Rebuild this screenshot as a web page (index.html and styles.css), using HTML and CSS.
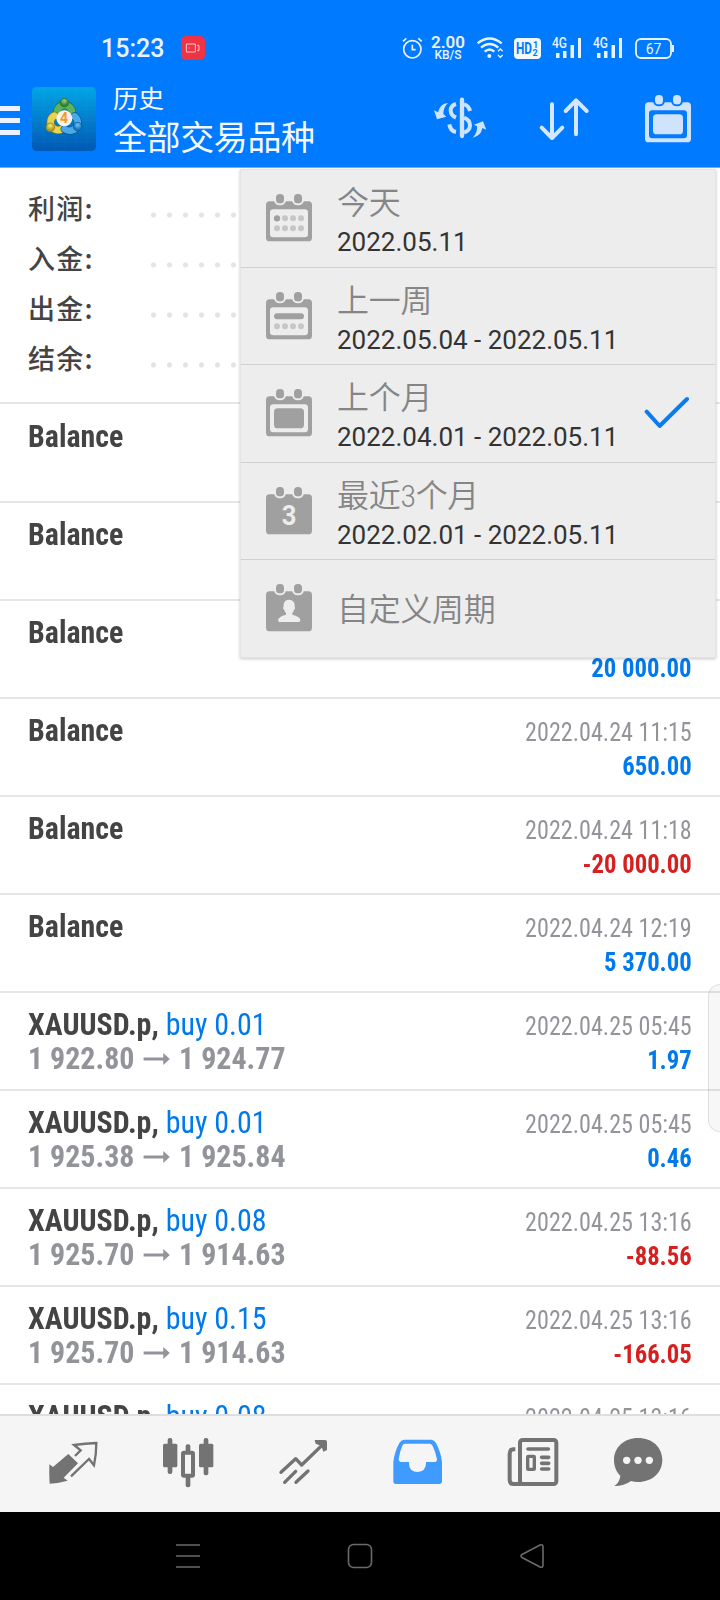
FILE: index.html
```html
<!DOCTYPE html>
<html lang="zh-CN">
<head>
    <meta charset="UTF-8">
    <meta name="viewport" content="width=device-width, initial-scale=1.0">
    <title>历史</title>
    <link rel="stylesheet" href="styles.css">
</head>
<body>
    <!-- shared calendar shapes -->
    <svg class="defs" width="0" height="0">
        <defs>
            <mask id="cal-body">
                <rect width="138" height="144" fill="#fff"/>
                <rect x="24" y="-8" width="36" height="42" rx="17" fill="#000"/>
                <rect x="78" y="-8" width="36" height="42" rx="17" fill="#000"/>
            </mask>
            <g id="cal-rings">
                <rect x="30" y="0" width="24" height="28" rx="11"/>
                <rect x="84" y="0" width="24" height="28" rx="11"/>
            </g>
            <g id="cal-solid">
                <use href="#cal-rings"/>
                <rect y="22" width="138" height="120" rx="11" mask="url(#cal-body)"/>
            </g>
            <g id="cal-frame">
                <use href="#cal-rings"/>
                <path fill-rule="evenodd" mask="url(#cal-body)" d="M11 22H127Q138 22 138 33V131Q138 142 127 142H11Q0 142 0 131V33Q0 22 11 22ZM22 46Q12 46 12 56V120Q12 130 22 130H116Q126 130 126 120V56Q126 46 116 46Z"/>
            </g>
        </defs>
    </svg>

    <div class="phone">
        <header class="header">
            <div class="status-bar">
                <span class="clock">15:23</span>
                <svg class="rec" width="24" height="24" viewBox="0 0 72 72">
                    <rect width="72" height="72" rx="15" fill="#ee3344"/>
                    <path d="M16 24H43V48H16ZM48 30Q54 24 54 30V42Q54 48 48 42M23 36H26" fill="none" stroke="#ffc9ce" stroke-width="3"/>
                </svg>
                <svg class="alarm" width="22" height="24" viewBox="125 108 66 72" fill="none" stroke="#e9f3ff" stroke-width="5">
                    <circle cx="156" cy="148" r="26"/>
                    <path d="M156 134V149H166M128 124L138 115M184 124L174 115"/>
                </svg>
                <div class="speed"><b>2.00</b><span>KB/S</span></div>
                <svg class="wifi" width="28" height="24" viewBox="353 106 84 72" fill="none" stroke="#e9f3ff" stroke-width="7">
                    <path d="M355 128Q391 99 427 128M365 141Q391 119 417 141M376 153Q391 140 405 153"/>
                    <circle cx="390" cy="166" r="6" fill="#e9f3ff" stroke="none"/>
                    <path d="M416 152L423 145L430 152M416 163L423 170L430 163" stroke-width="4"/>
                </svg>
                <svg class="hd" width="27" height="21" viewBox="0 0 27 21">
                    <rect width="27" height="21" rx="4" fill="#f2f8ff"/>
                    <text x="2" y="16" font-size="16" font-weight="700" textLength="16" lengthAdjust="spacingAndGlyphs">HD</text>
                    <text x="19" y="10" font-size="9" font-weight="700">1</text>
                    <text x="18.500" y="18" font-size="9" font-weight="700">2</text>
                </svg>
                <svg class="signal" width="30" height="22" viewBox="0 0 30 22" fill="#e9f3ff">
                    <text x="0" y="11" font-size="14" font-weight="500" textLength="15" lengthAdjust="spacingAndGlyphs">4G</text>
                    <path d="M4 16h3.500v5H4zM11 14h3.500v7H11zM18.500 8H22v13h-3.500zM26 1h3v20h-3z"/>
                </svg>
                <svg class="signal" width="30" height="22" viewBox="0 0 30 22" fill="#e9f3ff">
                    <text x="0" y="11" font-size="14" font-weight="500" textLength="15" lengthAdjust="spacingAndGlyphs">4G</text>
                    <path d="M4 16h3.500v5H4zM11 14h3.500v7H11zM18.500 8H22v13h-3.500zM26 1h3v20h-3z"/>
                </svg>
                <svg class="battery" width="40" height="21" viewBox="0 0 40 21">
                    <rect x="1" y="1" width="35" height="19" rx="5" fill="none" stroke="#e9f3ff" stroke-width="1.800"/>
                    <path d="M38 7V14" stroke="#e9f3ff" stroke-width="2"/>
                    <text x="18.500" y="15.500" font-size="14" text-anchor="middle" fill="#e9f3ff">67</text>
                </svg>
            </div>

            <div class="app-bar">
                <div class="menu-btn"><i></i><i></i><i></i></div>
                <svg class="logo" width="64" height="64" viewBox="0 0 192 192">
                    <defs>
                        <linearGradient id="logo-bg" x2="0" y2="1"><stop offset="0" stop-color="#03a5e6"/><stop offset="1" stop-color="#0058b4"/></linearGradient>
                        <radialGradient id="green" cy=".3"><stop offset="0" stop-color="#9bd27c"/><stop offset="1" stop-color="#2c8335"/></radialGradient>
                        <radialGradient id="yellow" cy=".3"><stop offset="0" stop-color="#f7ec72"/><stop offset="1" stop-color="#b39a20"/></radialGradient>
                        <radialGradient id="sky" cy=".3"><stop offset="0" stop-color="#6ec6f5"/><stop offset="1" stop-color="#1676bd"/></radialGradient>
                    </defs>
                    <rect width="192" height="192" rx="14" fill="url(#logo-bg)"/>
                    <path d="M36 0V192M68 0V192M100 0V192M132 0V192M164 0V192M0 36H192M0 68H192M0 100H192M0 132H192M0 164H192" stroke="#fff" stroke-opacity=".06" stroke-width="2"/>
                    <g fill="none" stroke-width="20" stroke-linecap="round">
                        <path d="M75 82A23 23 0 1 1 120 82" stroke="#1f6a35" stroke-width="24"/>
                        <path d="M75 82A23 23 0 1 1 120 82" stroke="#5cb35c"/>
                        <path d="M67 86A23 23 0 1 0 90 126" stroke="#8a7a1c" stroke-width="24"/>
                        <path d="M67 86A23 23 0 1 0 90 126" stroke="#e3d54c"/>
                        <path d="M128 88A23 23 0 1 1 98 126" stroke="#0d5390" stroke-width="24"/>
                        <path d="M128 88A23 23 0 1 1 98 126" stroke="#4aa9e8"/>
                    </g>
                    <circle cx="97" cy="47" r="13" fill="url(#green)" stroke="#2a6d2f" stroke-width="2"/>
                    <circle cx="55" cy="121" r="13" fill="url(#yellow)" stroke="#8a7a1c" stroke-width="2"/>
                    <circle cx="137" cy="119" r="13" fill="url(#sky)" stroke="#0d5390" stroke-width="2"/>
                    <circle cx="97" cy="94" r="24" fill="#f7f3ea"/>
                    <text x="96" y="109" font-size="42" font-weight="700" text-anchor="middle" fill="#f09a2a">4</text>
                </svg>
                <div class="titles">
                    <div class="subtitle">历史</div>
                    <div class="title">全部交易品种</div>
                </div>
                <svg class="act-symbol" width="54" height="42" viewBox="219 291 162 126" fill="none" stroke="#cfe3fc" stroke-width="12">
                    <path d="M306 299V408" stroke-width="13" stroke-linecap="round"/>
                    <path d="M288 312Q272 317 272 332Q273 347 288 353M312 313Q326 316 330 333"/>
                    <path d="M268 373Q271 393 288 396M312 353Q330 360 330 377Q329 392 312 398"/>
                    <path d="M264 309Q240 310 234 337L222 331L231 358L259 350L250 342Q250 322 264 309Z" fill="#cfe3fc" stroke="none"/>
                    <path d="M338 413Q353 399 351 379L342 374L369 364L379 389L367 384Q363 408 338 413Z" fill="#cfe3fc" stroke="none"/>
                </svg>
                <svg class="act-sort" width="52" height="44" viewBox="534 290 156 132" fill="none" stroke="#d5e7fd" stroke-width="12" stroke-linecap="round" stroke-linejoin="round">
                    <path d="M576 312V410M545 382L576 413L607 382M648 402V303M617 332L648 300L680 332"/>
                </svg>
                <svg class="act-cal" width="46" height="48" viewBox="0 0 138 144" fill="#cfe3fc">
                    <use href="#cal-frame"/>
                    <rect x="24" y="58" width="90" height="60" rx="11"/>
                </svg>
            </div>
        </header>

        <main class="content">
            <div class="summary">
                <div class="sum-row"><span>利润:</span><i class="dots"></i></div>
                <div class="sum-row"><span>入金:</span><i class="dots"></i></div>
                <div class="sum-row"><span>出金:</span><i class="dots"></i></div>
                <div class="sum-row"><span>结余:</span><i class="dots"></i></div>
            </div>

            <div class="row first">
                <div class="left"><div class="name">Balance</div></div>
            </div>
            <div class="row">
                <div class="left"><div class="name">Balance</div></div>
            </div>
            <div class="row">
                <div class="left"><div class="name">Balance</div></div>
                <div class="right"><div class="date">&nbsp;</div><div class="value up">20 000.00</div></div>
            </div>
            <div class="row">
                <div class="left"><div class="name">Balance</div></div>
                <div class="right"><div class="date">2022.04.24 11:15</div><div class="value up">650.00</div></div>
            </div>
            <div class="row">
                <div class="left"><div class="name">Balance</div></div>
                <div class="right"><div class="date">2022.04.24 11:18</div><div class="value down">-20 000.00</div></div>
            </div>
            <div class="row">
                <div class="left"><div class="name">Balance</div></div>
                <div class="right"><div class="date">2022.04.24 12:19</div><div class="value up">5 370.00</div></div>
            </div>
            <div class="row">
                <div class="left">
                    <div class="name">XAUUSD.p, <span>buy 0.01</span></div>
                    <div class="price">1 922.80 <svg class="arrow" viewBox="0 0 28 12"><path d="M0 4.500H21V0L28 6L21 12V7.500H0Z"/></svg> 1 924.77</div>
                </div>
                <div class="right"><div class="date">2022.04.25 05:45</div><div class="value up">1.97</div></div>
            </div>
            <div class="row">
                <div class="left">
                    <div class="name">XAUUSD.p, <span>buy 0.01</span></div>
                    <div class="price">1 925.38 <svg class="arrow" viewBox="0 0 28 12"><path d="M0 4.500H21V0L28 6L21 12V7.500H0Z"/></svg> 1 925.84</div>
                </div>
                <div class="right"><div class="date">2022.04.25 05:45</div><div class="value up">0.46</div></div>
            </div>
            <div class="row">
                <div class="left">
                    <div class="name">XAUUSD.p, <span>buy 0.08</span></div>
                    <div class="price">1 925.70 <svg class="arrow" viewBox="0 0 28 12"><path d="M0 4.500H21V0L28 6L21 12V7.500H0Z"/></svg> 1 914.63</div>
                </div>
                <div class="right"><div class="date">2022.04.25 13:16</div><div class="value down">-88.56</div></div>
            </div>
            <div class="row">
                <div class="left">
                    <div class="name">XAUUSD.p, <span>buy 0.15</span></div>
                    <div class="price">1 925.70 <svg class="arrow" viewBox="0 0 28 12"><path d="M0 4.500H21V0L28 6L21 12V7.500H0Z"/></svg> 1 914.63</div>
                </div>
                <div class="right"><div class="date">2022.04.25 13:16</div><div class="value down">-166.05</div></div>
            </div>
            <div class="row">
                <div class="left"><div class="name">XAUUSD.p, <span>buy 0.08</span></div></div>
                <div class="right"><div class="date">2022.04.25 13:16</div></div>
            </div>
        </main>

        <nav class="tabs">
            <svg width="52" height="52" viewBox="141 198 156 156" fill="#737373">
                <path d="M205 252L234 280L191 323L203 332Q175 340 149 341Q147 312 148 283L159 291Z"/>
                <path d="M213 319L267 267L282 286Q289 252 289 219Q255 220 222 225L242 241L225 258" fill="none" stroke="#737373" stroke-width="7"/>
            </svg>
            <svg width="52" height="52" viewBox="485 198 156 156" fill="#737373">
                <rect x="488" y="221" width="43" height="71" rx="5"/><rect x="502" y="204" width="14" height="108" rx="6"/>
                <rect x="596" y="221" width="43" height="71" rx="5"/><rect x="610" y="204" width="14" height="112" rx="6"/>
                <rect x="556" y="223" width="14" height="25" rx="6"/><rect x="556" y="315" width="14" height="37" rx="6"/>
                <rect x="548" y="248" width="30" height="69" rx="3" fill="none" stroke="#737373" stroke-width="12"/>
            </svg>
            <svg width="52" height="52" viewBox="829 198 156 156" fill="none" stroke="#737373" stroke-width="10" stroke-linecap="round" stroke-linejoin="round">
                <path d="M841 307L885 266L903 285L970 220M852 337L885 304M886 337L922 303"/>
                <path d="M942 210H973Q979 210 979 216V240L968 245L962 228L945 221Z" fill="#737373" stroke="none"/>
            </svg>
            <svg width="52" height="52" viewBox="96 198 156 156">
                <path fill="#409bff" fill-rule="evenodd" d="M132 209H214Q223 210 228 219Q243 248 246 276V334Q246 342 238 342H108Q100 342 100 334V276Q103 247 118 219Q123 210 132 209ZM134 221Q129 222 127 227Q119 245 116 268Q116 276 122 276H147V282Q149 306 173 306Q196 305 198 282V276H226Q232 275 231 268Q226 244 218 228Q215 222 210 221Z"/>
            </svg>
            <svg width="52" height="52" viewBox="442 198 156 156" fill="none" stroke="#737373">
                <rect x="481" y="210" width="109" height="132" rx="8" stroke-width="12"/>
                <path d="M467 238H460Q450 239 450 251V330Q450 342 462 342H484" stroke-width="12"/>
                <path d="M505 237H566M546 262H567M546 280H567M546 297H567" stroke-width="11" stroke-linecap="round"/>
                <rect x="504" y="259" width="20" height="39" stroke-width="10" rx="2"/>
            </svg>
            <svg class="chat" width="52" height="52" viewBox="758 198 156 156" fill="#737373">
                <path d="M836 204C880 204 909 233 909 270C909 308 878 336 836 336Q824 336 815 333Q795 348 765 348Q781 337 783 317C771 306 764 289 764 270C764 233 794 204 836 204Z"/>
                <g fill="#f5f5f5"><circle cx="802" cy="271" r="11"/><circle cx="836" cy="271" r="11"/><circle cx="870" cy="271" r="11"/></g>
            </svg>
        </nav>

        <footer class="sys-nav">
            <svg width="26" height="26" viewBox="0 0 26 26"><path d="M1 2H25M1 13H25M1 24H25"/></svg>
            <svg width="26" height="26" viewBox="0 0 26 26"><rect x="1.500" y="1.500" width="23" height="23" rx="5"/></svg>
            <svg width="26" height="26" viewBox="0 0 26 26"><path d="M3 11.500L21 2Q24 1 24 4V22Q24 25 21 24L3 14.500Q1 13 3 11.500Z"/></svg>
        </footer>

        <!-- period popup -->
        <div class="period-menu">
            <div class="item">
                <svg class="cal" width="46" height="48" viewBox="0 0 138 144">
                    <use href="#cal-frame"/>
                    <circle cx="33" cy="73" r="9.500"/>
                    <g fill="#c6c6c6">
                        <circle cx="57" cy="73" r="9"/><circle cx="81" cy="73" r="9"/><circle cx="105" cy="73" r="9"/>
                        <circle cx="33" cy="103" r="9"/><circle cx="57" cy="103" r="9"/><circle cx="81" cy="103" r="9"/><circle cx="105" cy="103" r="9"/>
                    </g>
                </svg>
                <div class="text"><div class="label">今天</div><div class="range">2022.05.11</div></div>
            </div>
            <div class="item">
                <svg class="cal" width="46" height="48" viewBox="0 0 138 144">
                    <use href="#cal-frame"/>
                    <rect x="24" y="64" width="90" height="18" rx="9"/>
                    <g fill="#c6c6c6"><circle cx="33" cy="103" r="9"/><circle cx="57" cy="103" r="9"/><circle cx="81" cy="103" r="9"/><circle cx="105" cy="103" r="9"/></g>
                </svg>
                <div class="text"><div class="label">上一周</div><div class="range">2022.05.04 - 2022.05.11</div></div>
            </div>
            <div class="item">
                <svg class="cal" width="46" height="48" viewBox="0 0 138 144">
                    <use href="#cal-frame"/>
                    <rect x="24" y="58" width="90" height="60" rx="11"/>
                </svg>
                <div class="text"><div class="label">上个月</div><div class="range">2022.04.01 - 2022.05.11</div></div>
                <svg class="check" width="46" height="34" viewBox="0 0 138 102"><path d="M8 47L47 90L129 9"/></svg>
            </div>
            <div class="item">
                <svg class="cal" width="46" height="48" viewBox="0 0 138 144">
                    <use href="#cal-solid"/>
                    <text x="69" y="115" font-size="84" font-weight="700" text-anchor="middle" fill="#ededed" textLength="44" lengthAdjust="spacingAndGlyphs">3</text>
                </svg>
                <div class="text"><div class="label">最近<span>3</span>个月</div><div class="range">2022.02.01 - 2022.05.11</div></div>
            </div>
            <div class="item custom">
                <svg class="cal" width="46" height="48" viewBox="0 0 138 144">
                    <use href="#cal-solid"/>
                    <path fill="#ededed" d="M69 47C81 47 87 56 86 67C88 70 87 76 84 78Q82 84 79 87V92Q101 98 103 107Q103 114 98 114H41Q36 114 36 108Q38 98 60 92V87Q56 84 55 78C51 76 50 70 53 67C52 56 57 47 69 47Z"/>
                </svg>
                <div class="text"><div class="label">自定义周期</div></div>
            </div>
        </div>

        <div class="edge-handle"></div>
    </div>
</body>
</html>
```
FILE: styles.css
```css
* {
    box-sizing: border-box;
}

body {
    margin: 0;
    font-family: Roboto, "Noto Sans CJK SC", sans-serif;
    background: #fff;
}

svg {
    display: block;
    flex: none;
}

.defs {
    position: absolute;
}

.phone {
    position: relative;
    width: 720px;
    height: 1600px;
    overflow: hidden;
    display: flex;
    flex-direction: column;
}

/* header */
.header {
    height: 168px;
    flex: none;
    background: #007aff;
    border-bottom: 1px solid #5fb8fb;
}

.status-bar {
    height: 80px;
    padding: 16px 0 0 101px;
    display: flex;
    align-items: center;
    color: #e9f3ff;
}

.clock {
    width: 80px;
    padding-top: 1px;
    font-size: 25px;
    font-weight: 500;
    line-height: 30px;
}

.alarm {
    margin-left: 197px;
}

.speed {
    display: flex;
    flex-direction: column;
    align-items: center;
    width: 36px;
    margin-left: 6px;
    font-weight: 500;
    font-size: 12px;
    line-height: 12px;
    white-space: nowrap;
}

.speed b {
    font-size: 17px;
    font-weight: 600;
    line-height: 14px;
}

.wifi {
    margin-left: 11px;
}

.hd {
    margin-left: 9px;
    fill: #007aff;
}

.signal {
    margin-left: 11px;
}

.battery {
    margin-left: 12px;
}

.app-bar {
    height: 87px;
    display: flex;
    align-items: flex-start;
    padding-top: 7px;
}

.menu-btn {
    width: 20px;
    margin: 19px 12px 0 0;
    display: flex;
    flex-direction: column;
    gap: 7px;
}

.menu-btn i {
    height: 5px;
    background: #e9f3ff;
}

.titles {
    width: 320px;
    padding-left: 17px;
    color: #f4f9ff;
    font-weight: 400;
}

.subtitle {
    font-size: 25.5px;
    line-height: 24px;
}

.title {
    margin-top: 7px;
    font-size: 34px;
    line-height: 40px;
    letter-spacing: -0.4px;
}

.act-symbol {
    margin: 10px 0 0 17px;
}

.act-sort {
    margin: 10px 0 0 51px;
}

.act-cal {
    margin: 8px 0 0 55px;
}

/* history list */
.content {
    flex: 1;
    min-height: 0;
    overflow: hidden;
}

.summary {
    height: 234px;
    padding: 15px 0 0 28px;
}

.sum-row {
    display: flex;
    height: 50px;
    line-height: 50px;
    font-size: 27px;
    font-weight: 500;
    letter-spacing: 1.2px;
    font-family: "Noto Sans CJK SC", sans-serif;
    color: #444;
}

.sum-row span {
    width: 117px;
}

.dots {
    flex: 1;
    background: radial-gradient(circle at 8.5px 32px, #e4e4e4 2.2px, transparent 3px) 0 0 / 16px 50px;
}

.row {
    height: 98px;
    display: flex;
    justify-content: space-between;
    padding: 14px 28px 0;
    border-top: 2px solid #e6e6e6;
    font-family: "Roboto Condensed", Roboto, sans-serif;
    font-stretch: 75%;
    white-space: nowrap;
}

.row.first {
    height: 99px;
    padding-top: 15px;
}

.left {
    transform: scaleX(0.936);
    transform-origin: left;
}

.name,
.price {
    font-size: 32px;
    line-height: 34px;
    font-weight: 700;
    color: #444;
}

.name span {
    font-weight: 400;
    color: #0079ec;
}

.price {
    color: #929499;
}

.arrow {
    display: inline-block;
    width: 31px;
    height: 12px;
    margin: 0 1px 4px;
    fill: #929499;
}

.right {
    text-align: right;
    font-size: 26px;
    line-height: 34px;
    padding-top: 2px;
}

.date {
    color: #929499;
    transform: scaleX(0.927);
    transform-origin: right;
}

.value {
    font-weight: 700;
    transform: scaleX(0.95);
    transform-origin: right;
}

.up {
    color: #0079ec;
}

.down {
    color: #d6201f;
}

/* bottom tabs */
.tabs {
    height: 98px;
    flex: none;
    display: flex;
    padding: 20px 0 0 47px;
    gap: 63px;
    background: #f5f5f5;
    border-top: 2px solid #dedede;
}

.chat {
    margin-left: -10px;
}

.sys-nav {
    height: 88px;
    flex: none;
    display: flex;
    gap: 146px;
    padding: 31px 0 0 175px;
    background: #000;
}

.sys-nav svg {
    fill: none;
    stroke: #6a6a6a;
    stroke-width: 1.6;
}

/* popup */
.period-menu {
    position: absolute;
    left: 240px;
    top: 169px;
    width: 476px;
    height: 489px;
    background: #ededed;
    border: 1px solid #e3e3e3;
    box-shadow: 0 1px 3px rgba(0, 0, 0, 0.22);
    display: flex;
    flex-direction: column;
}

.item {
    flex: 1;
    display: flex;
    padding-left: 25px;
    border-top: 1px solid #d0d0d0;
}

.item:first-child {
    border-top: none;
}

.cal {
    margin-top: 24px;
    fill: #a0a0a0;
}

.text {
    width: 332px;
    padding: 13px 0 0 25px;
    white-space: nowrap;
}

.label {
    font-size: 32px;
    line-height: 40px;
    font-weight: 350;
    letter-spacing: -0.3px;
    color: #858585;
}

.label span {
    font-stretch: 75%;
}

.range {
    margin-top: 1px;
    font-size: 26px;
    line-height: 36px;
    color: #333;
}

.custom .text {
    padding-top: 30px;
}

.check {
    margin-top: 31px;
    fill: none;
    stroke: #0b7cf0;
    stroke-width: 12;
    stroke-linecap: round;
    stroke-linejoin: round;
}

.edge-handle {
    position: absolute;
    left: 708px;
    top: 984px;
    width: 24px;
    height: 148px;
    border: 1px solid rgba(0, 0, 0, 0.1);
    border-radius: 12px;
    background: rgba(0, 0, 0, 0.03);
}
```
